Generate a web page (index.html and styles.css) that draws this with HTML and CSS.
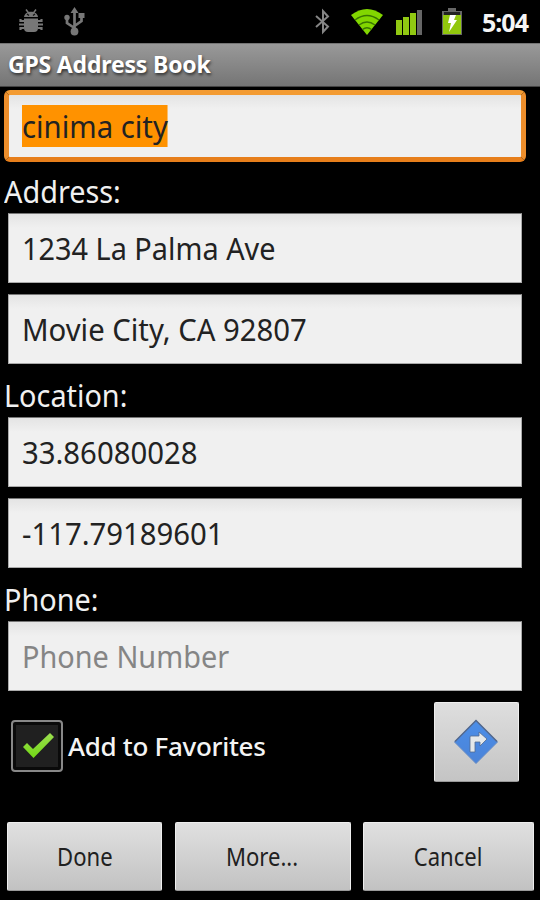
FILE: index.html
```html
<!DOCTYPE html>
<html lang="en">
<head>
<meta charset="utf-8">
<title>GPS Address Book</title>
<link rel="stylesheet" href="styles.css">
</head>
<body>
<header class="status">
  <svg class="droid" width="26" height="26" viewBox="0 0 26 26">
    <g fill="#777" stroke="#777">
      <path d="M6 9C7 2 19 2 20 9Z" stroke="none"/>
      <path d="M8 1.500l3 4M18 1.500l-3 4" stroke-width="1.5"/>
      <path d="M6 10.500H20V20Q20 24 16 24H10Q6 24 6 20Z" stroke="none"/>
      <path d="M6 13H2.500V11M6 16.500H1M6 20H2.500V22M20 13H23.500V11M20 16.500H25M20 20H23.500V22" fill="none" stroke-width="2.200"/>
    </g>
    <path d="M9 6l2 1.500M17 6l-2 1.500" stroke="#111" stroke-width="1.300"/>
  </svg>
  <svg class="usb" width="22" height="30" viewBox="0 0 22 30">
    <path d="M10.500 25V5M10.500 21L3 16V10M10.500 19L17.500 14V9" fill="none" stroke="#777" stroke-width="2.700"/>
    <path d="M10.500 0l4 6h-8zM14.500 6h6v5h-6z" fill="#777"/>
    <circle cx="3" cy="10.500" r="2.700" fill="#777"/><circle cx="10.500" cy="24.500" r="3.900" fill="#777"/>
  </svg>
  <svg class="bt" width="18" height="28" viewBox="0 0 18 28">
    <path d="M2 8L14 18.500L9 24V3L14 8.500L2 19" fill="none" stroke="#858585" stroke-width="2"/>
  </svg>
  <svg class="wifi" width="34" height="28" viewBox="0 0 34 28">
    <path d="M1 7Q17-5 33 7L17 27Z" fill="#82d600"/>
    <path d="M5 12Q17 3 29 12M9 17Q17 11 25 17M12.500 21.500Q17 18 21.500 21.500" fill="none" stroke="#397600" stroke-width="1.400"/>
  </svg>
  <svg class="signal" width="28" height="26" viewBox="0 0 28 26">
    <path d="M0 10h6v15H0zM7 7h6v18H7zM14 3h6v22h-6z" fill="#91c912"/>
    <path d="M21 0h5v25h-5z" fill="#666"/>
  </svg>
  <svg class="battery" width="20" height="28" viewBox="0 0 20 28">
    <path d="M0 3h6V0h8v3h6v24H0z" fill="#666"/><path d="M2 4h16v3H2z" fill="#222"/>
    <path d="M1 7h18v19H1z" fill="#91c70d"/>
    <path d="M8 7h6l-2 5h3L7 24l2-9H6z" fill="#fff"/>
  </svg>
  <span class="clock">5:04</span>
</header>
<h1 class="title"><span>GPS Address Book</span></h1>
<main class="form">
  <div class="field focused"><span class="selected">cinima city</span></div>
  <div class="label"><span>Address:</span></div>
  <div class="field"><span class="street">1234 La Palma Ave</span></div>
  <div class="field second"><span>Movie City, CA 92807</span></div>
  <div class="label spaced"><span>Location:</span></div>
  <div class="field"><span>33.86080028</span></div>
  <div class="field second"><span>-117.79189601</span></div>
  <div class="label spaced"><span>Phone:</span></div>
  <div class="field hint"><span class="street">Phone Number</span></div>
  <div class="favorites">
    <div class="check">
      <svg width="32" height="28" viewBox="0 0 32 28"><defs><linearGradient id="g" x2="0" y2="1"><stop stop-color="#9cdf50"/><stop offset="1" stop-color="#72d815"/></linearGradient></defs><path d="M0 14L4 10L10 16L27 0L31 4L10.500 25Z" fill="url(#g)"/></svg>
    </div>
    <span class="favtext">Add to Favorites</span>
    <div class="navigate">
      <svg width="46" height="46" viewBox="0 0 46 46"><defs><linearGradient id="b" x2="0" y2="1"><stop stop-color="#4b8ee8"/><stop offset="1" stop-color="#4b83d8"/></linearGradient></defs><path d="M23 1.500L44.500 23L23 44.500L1.500 23Z" fill="url(#b)" stroke="#6289c4"/><path d="M2 22.500L23 1.500L44 22.500" fill="none" stroke="#53698e" stroke-width="1.500"/><path d="M17 33V18Q17 17 18 17H26V13L34 20L27 27V23H22V33Z" fill="#e4e8ea" stroke="#526b91" stroke-width=".800"/></svg>
    </div>
  </div>
</main>
<footer class="actions">
  <div class="button"><span>Done</span></div>
  <div class="button"><span>More...</span></div>
  <div class="button"><span>Cancel</span></div>
</footer>
</body>
</html>
```
FILE: styles.css
```css
* { box-sizing: border-box; }
body { margin: 0; width: 540px; height: 900px; overflow: hidden; background: #000; font-family: "Noto Sans", "Open Sans", sans-serif; }
svg { display: block; flex: none; }
span { display: inline-block; white-space: nowrap; }
.status { height: 43px; display: flex; align-items: flex-start; }
.droid { margin: 8px 0 0 18px; }
.usb { margin: 7px 0 0 20px; }
.bt { margin: 8px 0 0 228px; }
.wifi { margin: 8px 0 0 18px; }
.signal { margin: 10px 0 0 12px; }
.battery { margin: 8px 0 0 18px; }
.clock { margin: 5px 0 0 20px; color: #f5f5f5; font-size: 25px; line-height: 34px; font-weight: 700; letter-spacing: -1px; }
.title { margin: 0; height: 44px; padding-left: 8px; background: linear-gradient(#999, #757575); border-top: 1px solid #747474; border-bottom: 1px solid #444; color: #fff; font-size: 23px; line-height: 40px; font-weight: 700; letter-spacing: -.18px; text-shadow: 1px 2px 3px #333; }
.form { height: 735px; padding: 3px 0 0 8px; }
.field { width: 514px; height: 70px; padding-left: 13px; display: flex; align-items: center; background: linear-gradient(#e4e4e4, #f0f0f0 14px); border: 1px solid #aaa; border-top-color: #777; color: #222; font-size: 31px; line-height: 40px; }
.field span { transform: scaleX(.945); transform-origin: left; }
.field .street { transform: scaleX(.931); }
.second { margin-top: 11px; }
.focused { width: 522px; height: 72px; margin-left: -4px; padding-left: 13px; border: 5px solid; border-color: #f39b32 #ed8e2b #e77f1b; border-radius: 6px; }
.selected { background: #ff9200; height: 42px; line-height: 42px; margin-top: -1px; }
.label { height: 51px; padding-top: 10px; margin-left: -4px; color: #f0f0f0; font-size: 31px; line-height: 38px; }
.label span { transform: scaleX(.93); transform-origin: left; }
.spaced { height: 53px; padding-top: 12px; }
.hint { color: #858585; }
.favorites { display: flex; align-items: flex-start; padding: 11px 0 0 3px; }
.check { width: 52px; height: 52px; margin-top: 18px; border: 2px solid #888; border-radius: 4px; padding: 11px 0 0 10px; background: #202020; box-shadow: inset 0 0 0 3px #0a0a0a; }
.favtext { width: 366px; margin: 26px 0 0 5px; color: #f4f4f4; font-size: 26px; line-height: 36px; font-weight: 500; letter-spacing: -.3px; }
.navigate { width: 85px; height: 80px; display: flex; padding: 16px 0 0 18px; background: linear-gradient(#dedede, #c4c4c4); border: 1px solid #eee; border-bottom-color: #999; border-radius: 2px; }
.actions { display: grid; grid-template-columns: 155px 176px 171px; gap: 12.5px; padding-left: 7px; }
.button { height: 69px; display: flex; justify-content: center; align-items: center; color: #202020; font-size: 24.5px; background: linear-gradient(#e0e0e0, #c2c2c2); border: 1px solid #eee; border-bottom-color: #999; border-radius: 2px; }
.button span { transform: scaleX(.9); }
```
